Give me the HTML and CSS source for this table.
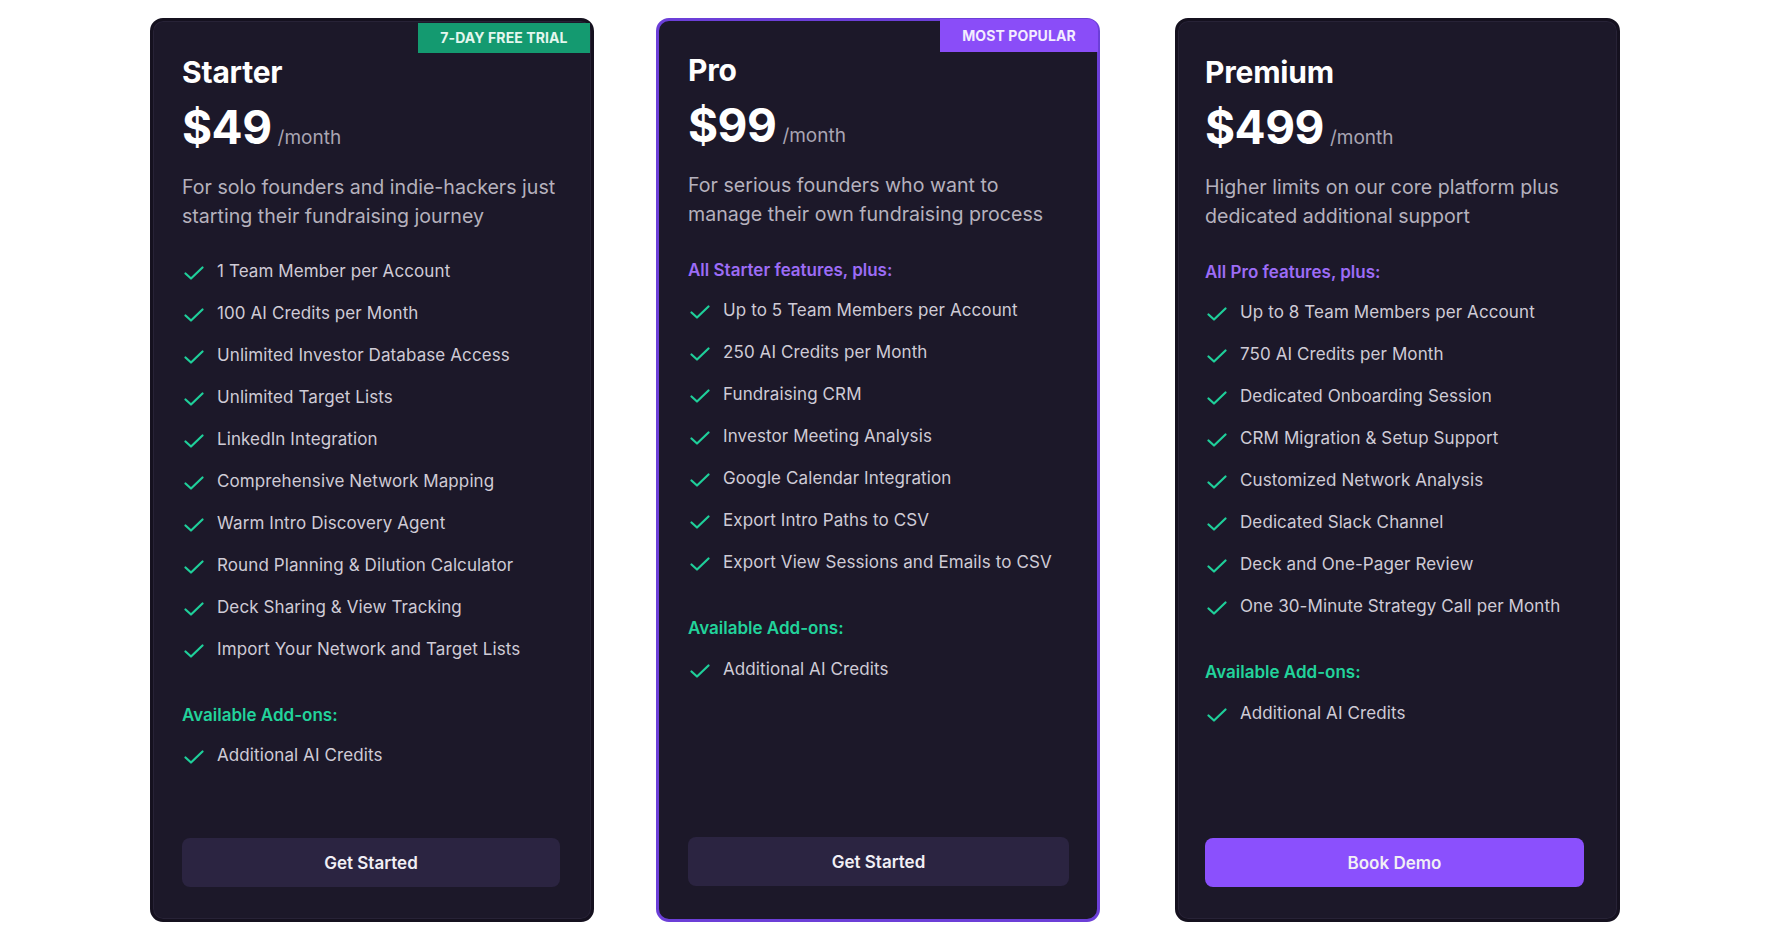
FILE: index.html
```html
<!DOCTYPE html>
<html lang="en">
<head>
<meta charset="utf-8">
<title>Pricing</title>
<link rel="stylesheet" href="styles.css">
</head>
<body>
<div class="plans">
  <section class="card card-starter">
    <div class="badge badge-green">7-DAY FREE TRIAL</div>
    <h2 class="title">Starter</h2>
    <div class="price"><span class="amount">$49</span><span class="per">/month</span></div>
    <p class="desc">For solo founders and indie-hackers just starting their fundraising journey</p>
    <ul class="features first">
      <li><svg class="chk" viewBox="0 0 20 14"><path d="M1.5 7.5 L7 12.5 L18.5 1.5"/></svg>1 Team Member per Account</li>
      <li><svg class="chk" viewBox="0 0 20 14"><path d="M1.5 7.5 L7 12.5 L18.5 1.5"/></svg>100 AI Credits per Month</li>
      <li><svg class="chk" viewBox="0 0 20 14"><path d="M1.5 7.5 L7 12.5 L18.5 1.5"/></svg>Unlimited Investor Database Access</li>
      <li><svg class="chk" viewBox="0 0 20 14"><path d="M1.5 7.5 L7 12.5 L18.5 1.5"/></svg>Unlimited Target Lists</li>
      <li><svg class="chk" viewBox="0 0 20 14"><path d="M1.5 7.5 L7 12.5 L18.5 1.5"/></svg>LinkedIn Integration</li>
      <li><svg class="chk" viewBox="0 0 20 14"><path d="M1.5 7.5 L7 12.5 L18.5 1.5"/></svg>Comprehensive Network Mapping</li>
      <li><svg class="chk" viewBox="0 0 20 14"><path d="M1.5 7.5 L7 12.5 L18.5 1.5"/></svg>Warm Intro Discovery Agent</li>
      <li><svg class="chk" viewBox="0 0 20 14"><path d="M1.5 7.5 L7 12.5 L18.5 1.5"/></svg>Round Planning &amp; Dilution Calculator</li>
      <li><svg class="chk" viewBox="0 0 20 14"><path d="M1.5 7.5 L7 12.5 L18.5 1.5"/></svg>Deck Sharing &amp; View Tracking</li>
      <li><svg class="chk" viewBox="0 0 20 14"><path d="M1.5 7.5 L7 12.5 L18.5 1.5"/></svg>Import Your Network and Target Lists</li>
    </ul>
    <h3 class="label label-green addons">Available Add-ons:</h3>
    <ul class="features">
      <li><svg class="chk" viewBox="0 0 20 14"><path d="M1.5 7.5 L7 12.5 L18.5 1.5"/></svg>Additional AI Credits</li>
    </ul>
    <button class="btn btn-dark">Get Started</button>
  </section>

  <section class="card card-pro">
    <div class="badge badge-purple">MOST POPULAR</div>
    <h2 class="title">Pro</h2>
    <div class="price"><span class="amount">$99</span><span class="per">/month</span></div>
    <p class="desc">For serious founders who want to manage their own fundraising process</p>
    <h3 class="label label-purple first">All Starter features, plus:</h3>
    <ul class="features">
      <li><svg class="chk" viewBox="0 0 20 14"><path d="M1.5 7.5 L7 12.5 L18.5 1.5"/></svg>Up to 5 Team Members per Account</li>
      <li><svg class="chk" viewBox="0 0 20 14"><path d="M1.5 7.5 L7 12.5 L18.5 1.5"/></svg>250 AI Credits per Month</li>
      <li><svg class="chk" viewBox="0 0 20 14"><path d="M1.5 7.5 L7 12.5 L18.5 1.5"/></svg>Fundraising CRM</li>
      <li><svg class="chk" viewBox="0 0 20 14"><path d="M1.5 7.5 L7 12.5 L18.5 1.5"/></svg>Investor Meeting Analysis</li>
      <li><svg class="chk" viewBox="0 0 20 14"><path d="M1.5 7.5 L7 12.5 L18.5 1.5"/></svg>Google Calendar Integration</li>
      <li><svg class="chk" viewBox="0 0 20 14"><path d="M1.5 7.5 L7 12.5 L18.5 1.5"/></svg>Export Intro Paths to CSV</li>
      <li><svg class="chk" viewBox="0 0 20 14"><path d="M1.5 7.5 L7 12.5 L18.5 1.5"/></svg>Export View Sessions and Emails to CSV</li>
    </ul>
    <h3 class="label label-green addons">Available Add-ons:</h3>
    <ul class="features">
      <li><svg class="chk" viewBox="0 0 20 14"><path d="M1.5 7.5 L7 12.5 L18.5 1.5"/></svg>Additional AI Credits</li>
    </ul>
    <button class="btn btn-dark">Get Started</button>
  </section>

  <section class="card card-premium">
    <h2 class="title">Premium</h2>
    <div class="price"><span class="amount">$499</span><span class="per">/month</span></div>
    <p class="desc">Higher limits on our core platform plus dedicated additional support</p>
    <h3 class="label label-purple first">All Pro features, plus:</h3>
    <ul class="features">
      <li><svg class="chk" viewBox="0 0 20 14"><path d="M1.5 7.5 L7 12.5 L18.5 1.5"/></svg>Up to 8 Team Members per Account</li>
      <li><svg class="chk" viewBox="0 0 20 14"><path d="M1.5 7.5 L7 12.5 L18.5 1.5"/></svg>750 AI Credits per Month</li>
      <li><svg class="chk" viewBox="0 0 20 14"><path d="M1.5 7.5 L7 12.5 L18.5 1.5"/></svg>Dedicated Onboarding Session</li>
      <li><svg class="chk" viewBox="0 0 20 14"><path d="M1.5 7.5 L7 12.5 L18.5 1.5"/></svg>CRM Migration &amp; Setup Support</li>
      <li><svg class="chk" viewBox="0 0 20 14"><path d="M1.5 7.5 L7 12.5 L18.5 1.5"/></svg>Customized Network Analysis</li>
      <li><svg class="chk" viewBox="0 0 20 14"><path d="M1.5 7.5 L7 12.5 L18.5 1.5"/></svg>Dedicated Slack Channel</li>
      <li><svg class="chk" viewBox="0 0 20 14"><path d="M1.5 7.5 L7 12.5 L18.5 1.5"/></svg>Deck and One-Pager Review</li>
      <li><svg class="chk" viewBox="0 0 20 14"><path d="M1.5 7.5 L7 12.5 L18.5 1.5"/></svg>One 30-Minute Strategy Call per Month</li>
    </ul>
    <h3 class="label label-green addons">Available Add-ons:</h3>
    <ul class="features">
      <li><svg class="chk" viewBox="0 0 20 14"><path d="M1.5 7.5 L7 12.5 L18.5 1.5"/></svg>Additional AI Credits</li>
    </ul>
    <button class="btn btn-purple">Book Demo</button>
  </section>
</div>
</body>
</html>
```

FILE: styles.css
```css
* { box-sizing: border-box; }

html, body {
  margin: 0;
  padding: 0;
  background: #ffffff;
}

body {
  font-family: Inter, "Noto Sans", "Liberation Sans", sans-serif;
  color: #ffffff;
}

.plans {
  display: flex;
  align-items: flex-start;
  padding: 18px 0 0 150px;
}

.card {
  position: relative;
  display: flex;
  flex-direction: column;
  width: 444px;
  height: 904px;
  padding: 33px 31px 32px 29px;
  background: #1c1829;
  border: 3px solid #15111f;
  border-radius: 13px;
  box-shadow: inset 0 0 0 1px #272236;
}

.card-pro {
  width: 444px;
  margin-left: 62px;
  padding-top: 31px;
  padding-right: 28px;
  padding-bottom: 33px;
  border-color: #6c3fd8;
  box-shadow: none;
}

.card-premium {
  width: 445px;
  margin-left: 75px;
  padding-left: 27px;
  padding-right: 33px;
}

.badge {
  position: absolute;
  font-size: 14px;
  font-weight: 700;
  letter-spacing: 0.1px;
  line-height: 30px;
  text-align: center;
}

.badge-green {
  top: 2px;
  right: 1px;
  width: 172px;
  height: 30px;
  background: #149a70;
  color: #e3f7ee;
}

.badge-purple {
  top: -2px;
  right: -1px;
  width: 158px;
  height: 33px;
  line-height: 33px;
  background: #8a4df8;
  color: #f3ecff;
  border-radius: 0 10px 0 0;
}

.title {
  margin: 0;
  font-size: 30px;
  line-height: 36px;
  font-weight: 700;
  color: #ffffff;
  letter-spacing: -0.2px;
}

.price {
  display: flex;
  align-items: baseline;
  margin-top: 14px;
}

.amount {
  font-size: 46px;
  line-height: 46px;
  font-weight: 700;
  letter-spacing: -0.5px;
}

.per {
  margin-left: 6px;
  font-size: 19px;
  color: #a9a5b3;
}

.desc {
  margin: 22.5px 0 0;
  font-size: 19.6px;
  line-height: 29px;
  color: #b5b1bd;
}

.features {
  list-style: none;
  margin: 15.5px 0 0;
  padding: 0;
  display: flex;
  flex-direction: column;
  gap: 16px;
}

.features li {
  display: flex;
  align-items: center;
  height: 26px;
  font-size: 17px;
  letter-spacing: 0.1px;
  color: #cfcbd6;
}

.features.first {
  margin-top: 27px;
}

.chk {
  flex: none;
  width: 20px;
  height: 14px;
  margin: 4px 13px 0 2px;
  fill: none;
  stroke: #1fcf9a;
  stroke-width: 2.2;
  stroke-linecap: round;
  stroke-linejoin: round;
}

.label {
  margin: 0;
  font-size: 17px;
  line-height: 24px;
  font-weight: 600;
}

.label.first {
  margin-top: 29px;
}

.label-green { color: #22d39b; }
.label-purple { color: #9c6cf6; }

.addons {
  margin-top: 41px;
}

.btn {
  margin-top: auto;
  width: 100%;
  height: 49px;
  border: none;
  border-radius: 8px;
  font-family: Inter, "Noto Sans", "Liberation Sans", sans-serif;
  font-size: 17px;
  font-weight: 600;
  color: #f1eff5;
  cursor: pointer;
}

.btn-dark { background: #2b2441; }
.btn-purple { background: #8b50fd; }
```
